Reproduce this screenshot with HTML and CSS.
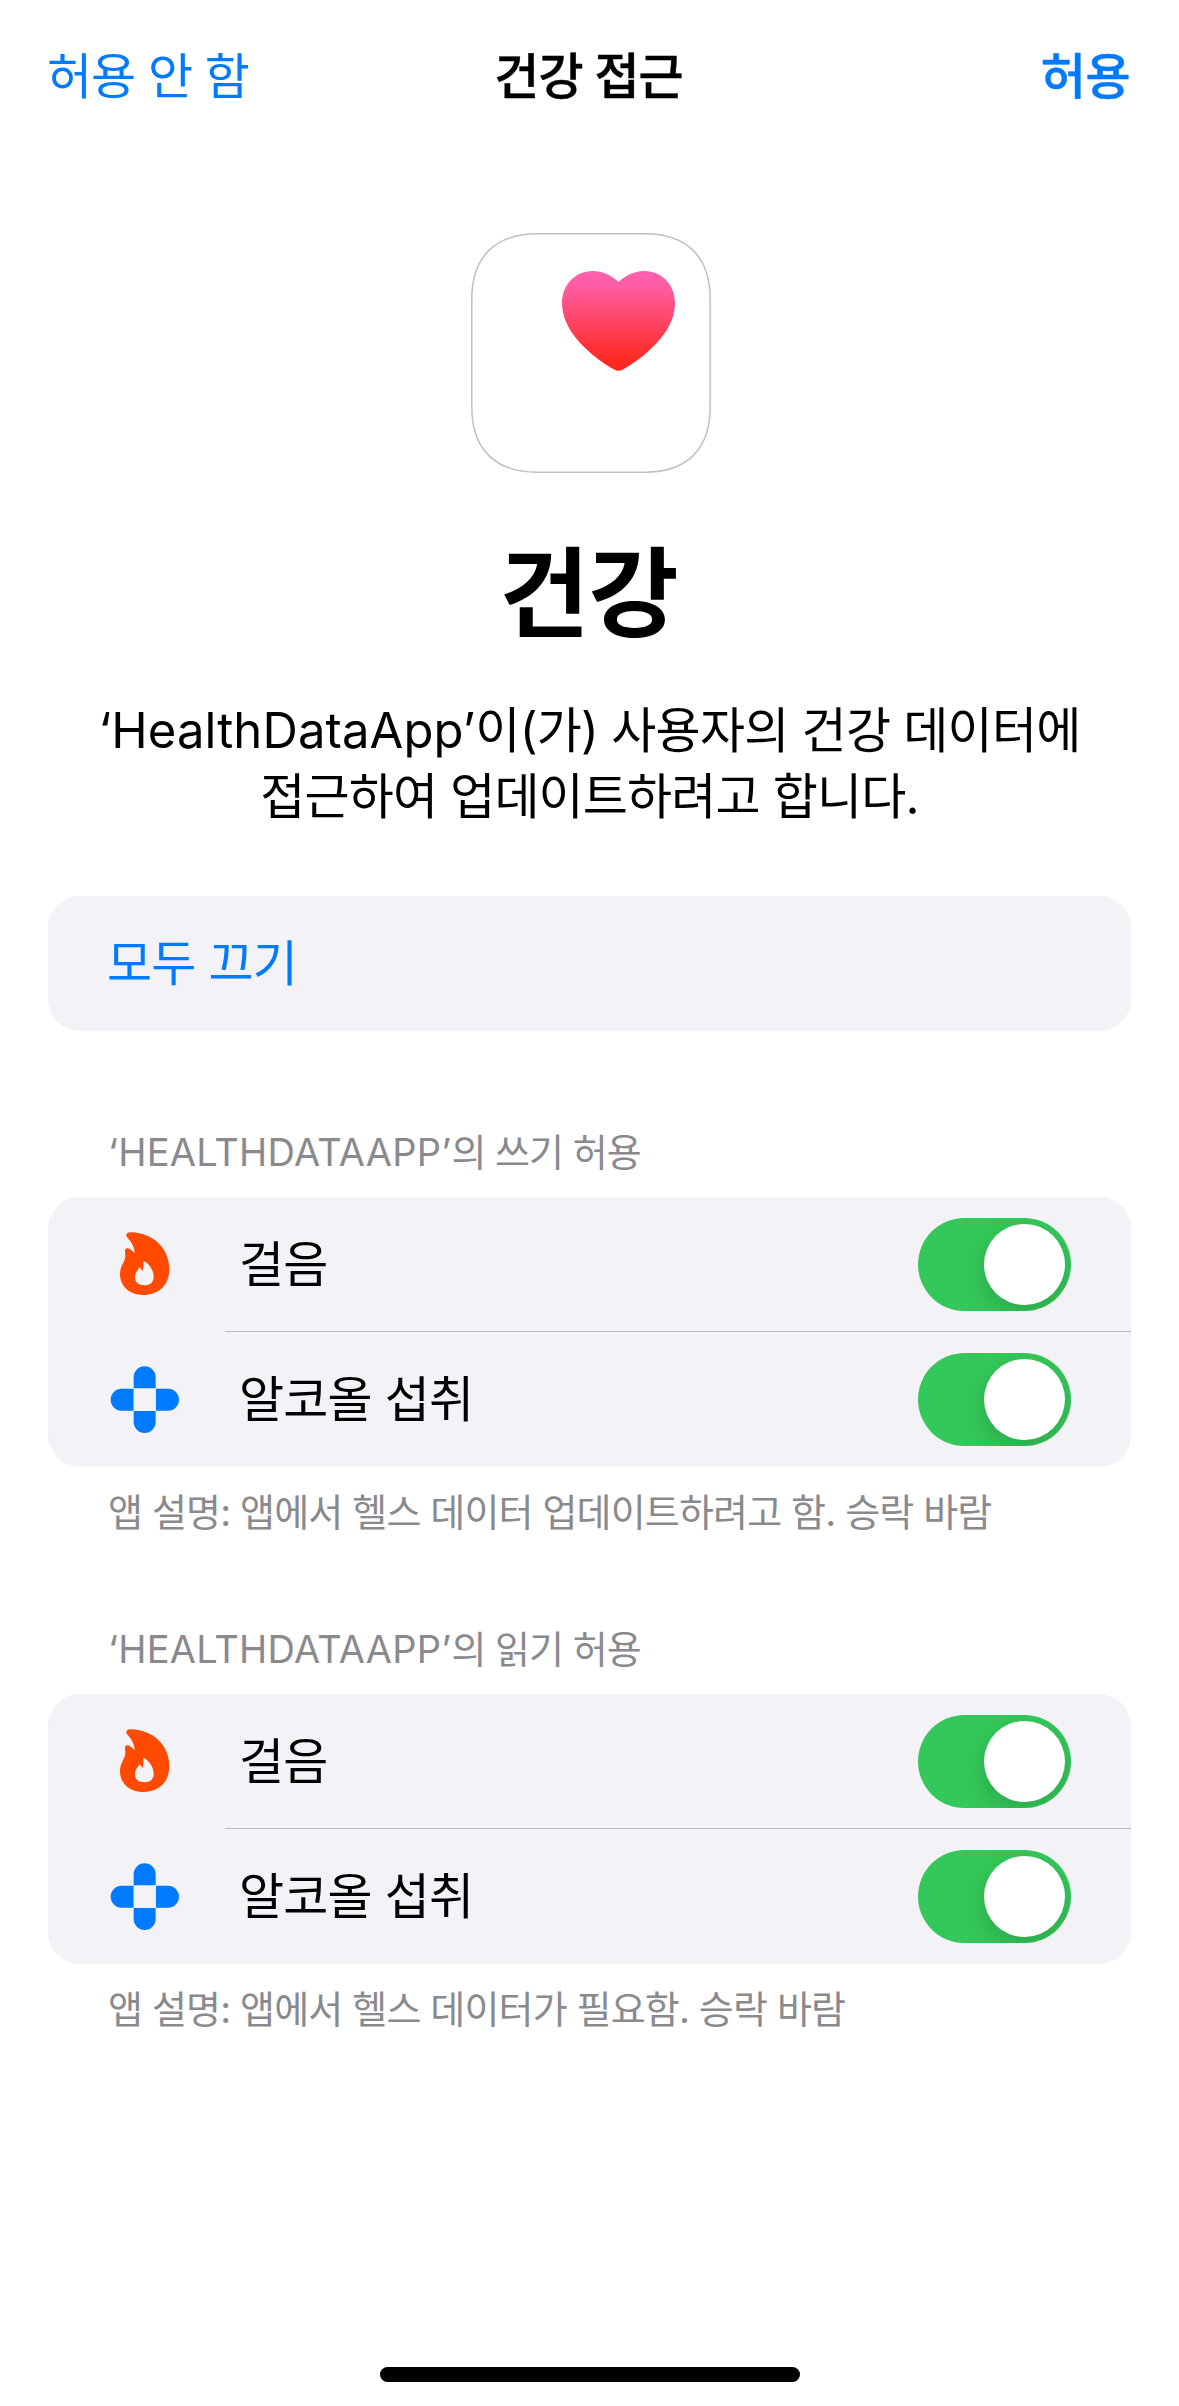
FILE: index.html
```html
<!DOCTYPE html>
<html lang="ko">
<head>
<meta charset="utf-8">
<title>건강 접근</title>
<link rel="stylesheet" href="styles.css">
</head>
<body>
<svg class="defs" width="0" height="0" aria-hidden="true">
  <symbol id="flame" viewBox="54 89 222 210">
    <path fill="#ff4a00" fill-rule="evenodd" d="M109 105C109 98 115 95 124 96C190 98 238 145 238 206C238 255 206 284 159 284C119 284 90 258 90 222C90 195 105 187 106 168L105 152C105 145 109 143 114 144C121 146 127 152 134 159C133 138 124 125 113 113C110 110 109 108 109 105ZM160 183C163 179 191 200 191 229C191 246 180 255 163 255C146 255 135 247 135 231C135 217 143 211 148 201C153 203 155 208 158 213C161 203 160 193 160 183Z"/>
  </symbol>
  <symbol id="cross" viewBox="54 494 222 210">
    <path fill="#007aff" d="M131 564V531a33 33 0 0 1 66 0V564ZM131 632V665a33 33 0 0 0 66 0V632ZM130.500 565H95a33 33 0 0 0 0 66H130.500ZM198 565H234a33 33 0 0 1 0 66H198Z"/>
  </symbol>
</svg>
<div class="sheet">
  <header class="nav">
    <button class="nav-button deny">허용 안 함</button>
    <h2 class="nav-title">건강 접근</h2>
    <button class="nav-button allow">허용</button>
  </header>

  <section class="intro">
    <svg class="app-icon" viewBox="0 0 240 240">
      <defs>
        <linearGradient id="heart" x1="0" y1="0" x2="0" y2="1">
          <stop offset="0" stop-color="#ff61b0"/>
          <stop offset=".15" stop-color="#ff5da4"/>
          <stop offset=".88" stop-color="#ff2a24"/>
          <stop offset="1" stop-color="#ff2719"/>
        </linearGradient>
      </defs>
      <path fill="#fff" stroke="#c0c0c2" stroke-width="1.500" d="M66 .8H174C216 .8 239.200 24 239.200 66V174C239.200 216 216 239.200 174 239.200H66C24 239.200 .8 216 .8 174V66C.8 24 24 .8 66 .8Z"/>
      <path fill="url(#heart)" d="M147.500 49C154 43 162 38 173.500 38C191 38 204 52 204 70C204 95 182 119 152 136.500Q147.500 139 143 136.500C113 119 91 95 91 70C91 52 104 38 121.500 38C133 38 141 43 147.500 49Z"/>
    </svg>
    <h1 class="headline">건강</h1>
    <p class="summary"><span class="line first"><span class="latin">‘HealthDataApp’</span>이(가) 사용자의 건강 데이터에</span><span class="line second">접근하여 업데이트하려고 합니다.</span></p>
  </section>

  <div class="card"><button class="row toggle-all">모두 끄기</button></div>

  <section class="group">
    <h3 class="caption"><span class="latin">‘HEALTHDATAAPP’</span>의 쓰기 허용</h3>
    <div class="card">
      <div class="row ruled"><svg class="row-icon"><use href="#flame"/></svg><span class="label">걸음</span><span class="switch"><span class="knob"></span></span></div>
      <div class="row"><svg class="row-icon"><use href="#cross"/></svg><span class="label">알코올 섭취</span><span class="switch"><span class="knob"></span></span></div>
    </div>
    <p class="note">앱 설명: 앱에서 헬스 데이터 업데이트하려고 함. 승락 바람</p>
  </section>

  <section class="group">
    <h3 class="caption"><span class="latin">‘HEALTHDATAAPP’</span>의 읽기 허용</h3>
    <div class="card">
      <div class="row ruled"><svg class="row-icon"><use href="#flame"/></svg><span class="label">걸음</span><span class="switch"><span class="knob"></span></span></div>
      <div class="row"><svg class="row-icon"><use href="#cross"/></svg><span class="label">알코올 섭취</span><span class="switch"><span class="knob"></span></span></div>
    </div>
    <p class="note">앱 설명: 앱에서 헬스 데이터가 필요함. 승락 바람</p>
  </section>

  <div class="home-bar"></div>
</div>
</body>
</html>
```
FILE: styles.css
```css
* { box-sizing: border-box; margin: 0; padding: 0; }

body {
  background: #fff;
  color: #000;
  font-family: Inter, "Noto Sans CJK KR", sans-serif;
  font-size: 49px;
  letter-spacing: -1px;
  line-height: 66px;
}

button { border: 0; background: none; font: inherit; letter-spacing: inherit; color: #007aff; text-align: left; white-space: nowrap; }
h1, h2, h3 { font-weight: normal; }
.defs { display: block; height: 0; }

.sheet {
  display: flex;
  flex-direction: column;
  width: 1179px;
  height: 2406px;
  padding: 0 48px 24px;
}

.nav {
  display: grid;
  grid-template-columns: 1fr auto 1fr;
  align-items: center;
  height: 152px;
  padding: 2px 1px 0 0;
}
.nav-title, .nav-button.allow { font-size: 49px; font-weight: 500; -webkit-text-stroke: .5px; }
.nav-title { margin-left: -1px; }
.nav-button.deny { margin-left: -1px; }
.nav-button.allow { justify-self: end; letter-spacing: -.5px; }

.intro {
  display: flex;
  flex-direction: column;
  align-items: center;
  height: 744px;
  padding-top: 81px;
}
.app-icon { width: 240px; height: 240px; margin-left: 3px; }
.headline { margin: 56px 2px 0 0; font-size: 98px; font-weight: 700; line-height: 130px; letter-spacing: -1px; }
.summary { margin-top: 39px; text-align: center; white-space: nowrap; }
.line { display: block; }
.first { letter-spacing: -.75px; }
.first .latin { letter-spacing: .1px; }
.second { letter-spacing: -.85px; }

.card { flex: none; border-radius: 32px; background: #f2f2f7; overflow: hidden; }
.row { display: flex; align-items: center; width: 100%; height: 135px; padding: 0 60px; }
.toggle-all { padding-left: 59px; letter-spacing: -.8px; }
.row-icon { width: 74px; height: 70px; margin-right: 57px; }
.label { flex: 1; letter-spacing: -.8px; }
.ruled { background: linear-gradient(#bcbcc0, #bcbcc0) 177px 100% / 100% 1px no-repeat; }

.switch { display: flex; align-items: center; justify-content: flex-end; width: 153px; height: 93px; padding: 6px; border-radius: 47px; background: #34c759; overflow: hidden; }
.knob { width: 81px; height: 81px; border-radius: 50%; background: #fff; box-shadow: 0 9px 24px rgba(0, 0, 0, .16); }

.group { color: #8a8a8e; font-size: 38px; }
.group .label { color: #000; font-size: 49px; }
.caption, .note { padding-left: 60px; font-size: 38px; line-height: 52px; white-space: nowrap; }
.caption { height: 166px; padding-top: 95px; }
.caption .latin { letter-spacing: .25px; }
.note { height: 61px; padding-top: 19px; letter-spacing: -.85px; }

.home-bar { flex: none; width: 420px; height: 15px; margin: auto 0 0 332px; border-radius: 8px; background: #000; }
```
